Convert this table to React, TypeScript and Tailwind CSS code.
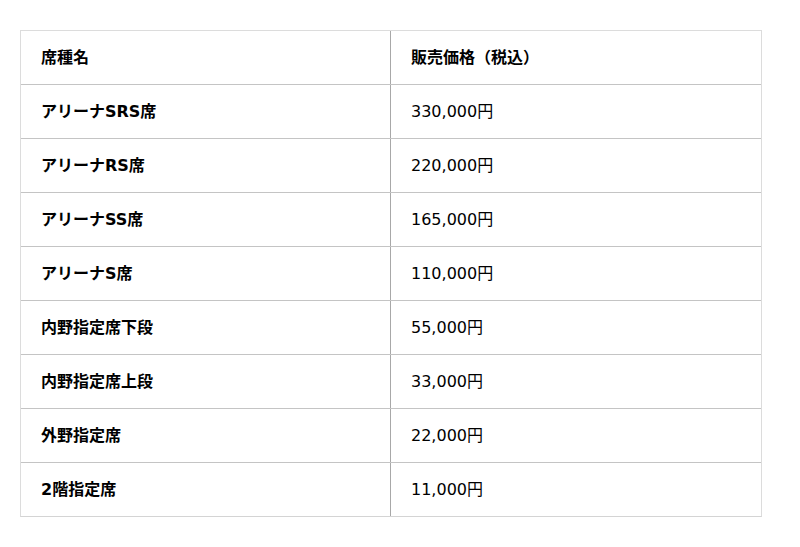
import React from "react";

const rows: [string, string][] = [
  ["アリーナSRS席", "330,000円"],
  ["アリーナRS席", "220,000円"],
  ["アリーナSS席", "165,000円"],
  ["アリーナS席", "110,000円"],
  ["内野指定席下段", "55,000円"],
  ["内野指定席上段", "33,000円"],
  ["外野指定席", "22,000円"],
  ["2階指定席", "11,000円"],
];

export default function App() {
  return (
    <div
      className="w-[800px] h-[547px] bg-white pt-[30px] pl-[20px] text-black text-[16px]"
      style={{ fontFamily: '"DejaVu Sans", "Noto Sans CJK JP", sans-serif' }}
    >
      <div className="w-[742px] border border-[#dcdcdc] border-b-[#d4d4d4]">
        <div className="grid grid-cols-[370px_1fr] h-[54px] border-b border-[#c4c4c4]">
          <div className="flex items-center pl-[20px] font-bold border-r border-[#a8a8a8]">席種名</div>
          <div className="flex items-center pl-[20px] font-bold">販売価格（税込）</div>
        </div>
        {rows.map(([a, b], i) => (
          <div
            key={a}
            className={
              i === rows.length - 1
                ? "grid grid-cols-[370px_1fr] h-[53px]"
                : "grid grid-cols-[370px_1fr] h-[54px] border-b border-[#c4c4c4]"
            }
          >
            <div className="flex items-center pl-[20px] font-bold border-r border-[#a8a8a8]">{a}</div>
            <div className="flex items-center pl-[20px]">{b}</div>
          </div>
        ))}
      </div>
    </div>
  );
}
